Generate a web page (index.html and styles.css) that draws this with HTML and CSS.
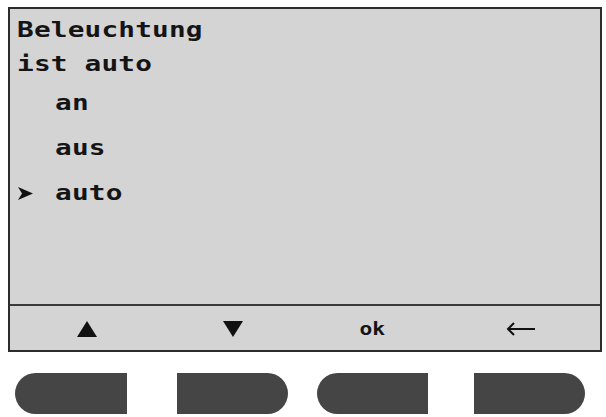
FILE: index.html
```html
<!DOCTYPE html>
<html>
<head>
<meta charset="utf-8">
<link rel="stylesheet" href="styles.css">
</head>
<body>
<div class="device">
  <div class="screen">
    <div class="content">
      <div class="title">
        <div class="line"><span class="lcd">Beleuchtung</span></div>
        <div class="line"><span class="lcd">ist auto</span></div>
      </div>
      <ul class="menu">
        <li class="item"><span class="marker"></span><span class="lcd">an</span></li>
        <li class="item"><span class="marker"></span><span class="lcd">aus</span></li>
        <li class="item selected"><span class="marker"><svg width="15" height="13" viewBox="0 0 15 13"><polygon points="0,0 15,6.5 0,13 4,6.5" fill="#111"/></svg></span><span class="lcd">auto</span></li>
      </ul>
    </div>
    <div class="softkeys">
      <div class="key key-up"><svg width="20" height="16" viewBox="0 0 20 16"><polygon points="10,0 20,16 0,16" fill="#111"/></svg></div>
      <div class="key key-down"><svg width="20" height="16" viewBox="0 0 20 16"><polygon points="0,0 20,0 10,16" fill="#111"/></svg></div>
      <div class="key key-ok"><span class="ok">ok</span></div>
      <div class="key key-back"><svg width="30" height="14" viewBox="0 0 30 14"><path d="M2 7 H29 M8 1 L2 7 L8 13" fill="none" stroke="#111" stroke-width="2"/></svg></div>
    </div>
  </div>
  <div class="buttons">
    <div class="btn btn-1"></div>
    <div class="btn btn-2"></div>
    <div class="btn btn-3"></div>
    <div class="btn btn-4"></div>
  </div>
</div>
</body>
</html>
```

FILE: styles.css
```css
html, body {
  margin: 0;
  padding: 0;
  background: #ffffff;
}

.device {
  width: 606px;
  height: 417px;
  padding-top: 7px;
  box-sizing: border-box;
}

.screen {
  margin-left: 8px;
  width: 594px;
  height: 345px;
  box-sizing: border-box;
  border: 2px solid #2c2c2c;
  background: #d4d4d4;
  display: flex;
  flex-direction: column;
}

.content {
  height: 295px;
  padding: 4px 0 0 7px;
  box-sizing: border-box;
  font-family: "DejaVu Sans Mono", "Liberation Mono", monospace;
  font-weight: bold;
  font-size: 21px;
  color: #141414;
}

.lcd {
  display: inline-block;
  letter-spacing: 0.15px;
  transform: scaleX(1.32);
  transform-origin: 0 50%;
  white-space: pre;
}

.title .line {
  height: 34px;
  line-height: 34px;
}

.menu {
  list-style: none;
  margin: 0;
  padding: 0;
}

.item {
  height: 45px;
  line-height: 45px;
  display: flex;
  align-items: center;
}

.marker {
  width: 38px;
  padding-left: 1px;
  box-sizing: border-box;
  display: flex;
  align-items: center;
  height: 45px;
}

.marker svg {
  display: block;
  margin-top: 0;
}

.softkeys {
  flex: 1;
  border-top: 2px solid #3a3a3a;
  display: grid;
  grid-template-columns: 153px 140px 138px 159px;
  align-items: center;
  padding-top: 1px;
}

.key {
  display: flex;
  justify-content: center;
  align-items: center;
  height: 40px;
}

.key svg {
  display: block;
}

.ok {
  display: inline-block;
  font-family: "DejaVu Sans Mono", "Liberation Mono", monospace;
  font-weight: bold;
  font-size: 17px;
  color: #141414;
  transform: scaleX(1.25);
  transform-origin: 50% 50%;
  margin-top: 1px;
}

.buttons {
  display: flex;
  margin-top: 21px;
  padding-left: 15px;
}

.btn {
  height: 41px;
  width: 112px;
  background: #454545;
}

.btn-1 {
  border-radius: 20.5px 0 0 20.5px;
}

.btn-2 {
  margin-left: 50px;
  width: 111px;
  border-radius: 0 20.5px 20.5px 0;
}

.btn-3 {
  margin-left: 29px;
  width: 111px;
  border-radius: 20.5px 0 0 20.5px;
}

.btn-4 {
  margin-left: 46px;
  width: 111px;
  border-radius: 0 20.5px 20.5px 0;
}
```
